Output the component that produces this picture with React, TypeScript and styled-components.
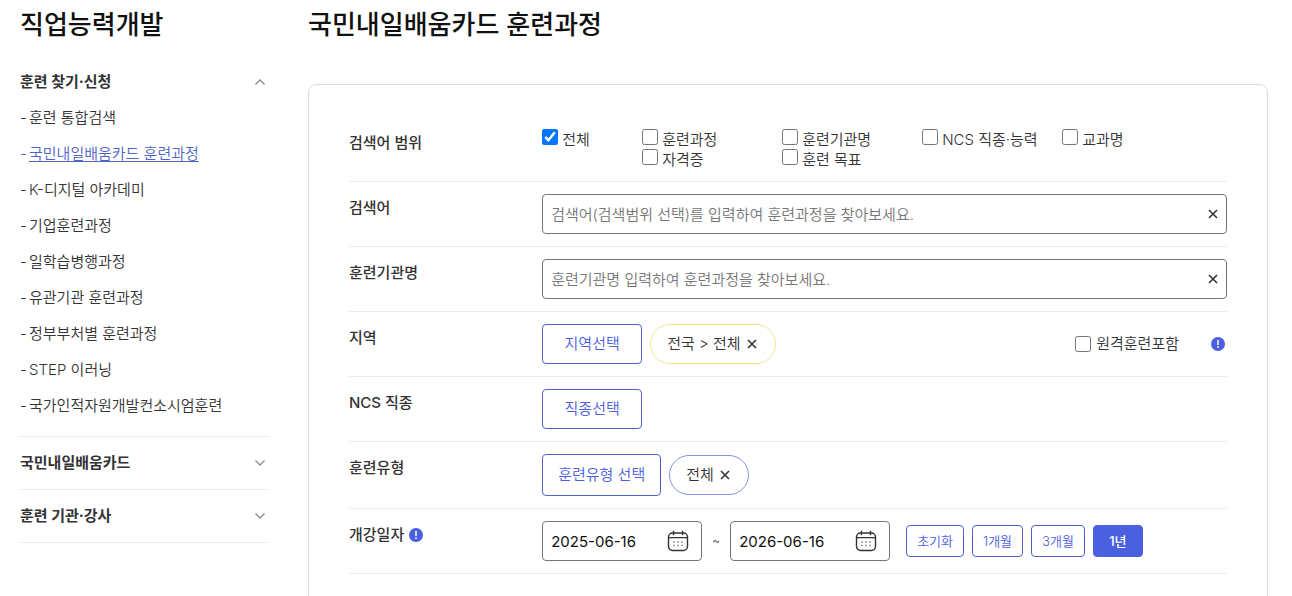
import React, { useState } from 'react';
import styled, { createGlobalStyle, css } from 'styled-components';

const blue = '#4a60de';
const outline = '#4f65c4';
const ink = '#333';

const GlobalStyle = createGlobalStyle`
  *, *::before, *::after { box-sizing: border-box; }
  body {
    margin: 0;
    background: #fff;
    color: ${ink};
    font-family: Inter, "Noto Sans CJK KR", sans-serif;
    font-size: 15px;
    font-weight: 350;
    line-height: 20px;
  }
  button, input { font: inherit; color: inherit; }
  button { cursor: pointer; }
`;

const Page = styled.div`
  display: flex;
  gap: 40px;
  padding: 0 24px 0 20px;
`;

const Sidebar = styled.aside`
  flex: 0 0 248px;
`;

const Main = styled.main`
  flex: 1;
  min-width: 0;
`;

const Title = styled.h1`
  margin: 0;
  font-size: 26px;
  line-height: 50px;
  font-weight: 500;
  color: #111;
`;

const SideTitle = styled(Title).attrs({ as: 'h2' })`
  margin-bottom: 6px;
`;

const Group = styled.section`
  padding: 8px 0;
  border-bottom: 1px solid #ebebeb;
`;

const GroupHead = styled.button`
  display: flex;
  align-items: center;
  justify-content: space-between;
  width: 100%;
  height: 36px;
  padding: 0 3px 0 0;
  border: 0;
  background: none;
  font-weight: 700;
  text-align: left;
`;

const MenuList = styled.ul`
  margin: 0;
  padding: 0 0 4px;
  list-style: none;
`;

const MenuItem = styled.li<{ $active?: boolean }>`
  display: flex;
  line-height: 36px;
  color: ${(p) => (p.$active ? outline : ink)};
  &::before {
    content: '-';
    flex: 0 0 9px;
  }
`;

const MenuLink = styled.a<{ $active?: boolean }>`
  color: inherit;
  text-decoration: ${(p) => (p.$active ? 'underline' : 'none')};
  text-underline-offset: 2px;
`;

const Card = styled.form`
  margin-top: 34px;
  padding: 32px 40px 40px;
  border: 1px solid #ddd;
  border-radius: 8px;
`;

const Row = styled.div`
  display: flex;
  padding: 12px 0;
  border-bottom: 1px solid #ebebeb;
`;

const RowLabel = styled.div`
  display: flex;
  align-items: center;
  gap: 5px;
  flex: 0 0 22%;
  height: 28px;
  font-weight: 500;
`;

const RowBody = styled.div`
  display: flex;
  align-items: center;
  gap: 8px;
  flex: 1;
  min-width: 0;
`;

const ScopeGrid = styled.div`
  display: grid;
  grid-template-columns: 100px repeat(4, 140px);
  grid-auto-rows: 20px;
`;

const CheckLabel = styled.label<{ $start?: boolean }>`
  display: flex;
  align-items: flex-start;
  gap: 4px;
  grid-column: ${(p) => (p.$start ? '2' : 'auto')};
  line-height: 22px;
  white-space: nowrap;
`;

const CheckBox = styled.input.attrs({ type: 'checkbox' })`
  width: 16px;
  height: 16px;
  margin: 0;
`;

const RemoteLabel = styled(CheckLabel)`
  align-items: center;
  gap: 5px;
`;

const Remote = styled.div`
  display: flex;
  align-items: center;
  gap: 32px;
  margin-left: auto;
  padding-right: 2px;
`;

const Field = styled.div<{ $date?: boolean }>`
  display: flex;
  align-items: center;
  height: 40px;
  padding: 0 8px;
  border: 1px solid #767676;
  border-radius: 4px;
  ${(p) => (p.$date ? css`flex: 0 0 160px; padding-right: 12px; color: #111; font-weight: 400;` : css`flex: 1;`)}
`;

const TextInput = styled.input`
  flex: 1;
  min-width: 0;
  width: 100%;
  height: 36px;
  padding: 0;
  border: 0;
  outline: 0;
  background: none;
  &::placeholder { color: #767676; }
`;

const IconButton = styled.button`
  display: flex;
  padding: 0;
  border: 0;
  background: none;
`;

const PickButton = styled.button<{ $tall?: boolean }>`
  min-width: 100px;
  height: ${(p) => (p.$tall ? 42 : 40)}px;
  padding: 0 15px;
  border: 1px solid ${outline};
  border-radius: 4px;
  background: #fff;
  color: ${blue};
`;

const Chip = styled.span<{ $color: string }>`
  display: flex;
  align-items: center;
  gap: 6px;
  height: 40px;
  padding: 0 18px 0 16px;
  border: 1px solid ${(p) => p.$color};
  border-radius: 20px;
`;

const Tilde = styled.span`
  flex: 0 0 12px;
  text-align: center;
  font-size: 12px;
`;

const Periods = styled.div`
  display: flex;
  gap: 8px;
  margin-left: 8px;
`;

const PeriodButton = styled.button<{ $on?: boolean }>`
  min-width: 50px;
  height: 32px;
  padding: 0 10px;
  border: 1px solid ${(p) => (p.$on ? blue : outline)};
  border-radius: 4px;
  background: ${(p) => (p.$on ? blue : '#fff')};
  color: ${(p) => (p.$on ? '#fff' : blue)};
  font-size: 13px;
  font-weight: ${(p) => (p.$on ? 500 : 350)};
`;

const Chevron = ({ up }: { up?: boolean }) => (
  <svg width="10" height="10" viewBox="0 0 10 10" fill="none" stroke="#8a8a8a" strokeWidth="1.3" aria-hidden>
    <path d={up ? 'M0.5 7.5 5 3l4.5 4.5' : 'M0.5 2.5 5 7l4.5-4.5'} />
  </svg>
);

const Cross = () => (
  <svg width="10" height="10" viewBox="0 0 10 10" stroke="#333" strokeWidth="1.6" aria-hidden>
    <path d="M1 1l8 8M9 1 1 9" />
  </svg>
);

const Info = () => (
  <svg width="14" height="14" viewBox="0 0 14 14" aria-hidden>
    <circle cx="7" cy="7" r="7" fill={blue} />
    <path d="M7 3v5M7 9.3v1.6" stroke="#fff" strokeWidth="1.5" />
  </svg>
);

const Calendar = () => (
  <svg width="22" height="22" viewBox="0 0 22 22" fill="none" stroke="#333" strokeWidth="1.4" aria-hidden>
    <rect x="1.5" y="3" width="19" height="17.5" rx="4" />
    <path d="M1.5 7.6h19M6.5 0.8v4.4M15.5 0.8v4.4" />
    <path d="M6 12h1.6M10.2 12h1.6M14.4 12H16M6 15.5h1.6M10.2 15.5h1.6M14.4 15.5H16" strokeWidth="1.6" stroke="#888" />
  </svg>
);

const menu = [
  '훈련 통합검색',
  '국민내일배움카드 훈련과정',
  'K-디지털 아카데미',
  '기업훈련과정',
  '일학습병행과정',
  '유관기관 훈련과정',
  '정부부처별 훈련과정',
  'STEP 이러닝',
  '국가인적자원개발컨소시엄훈련',
];

const scopes = ['전체', '훈련과정', '훈련기관명', 'NCS 직종·능력', '교과명', '자격증', '훈련 목표'];

const periods = ['초기화', '1개월', '3개월', '1년'];

function SearchRow({ id, label, placeholder }: { id: string; label: string; placeholder: string }) {
  const [value, setValue] = useState('');
  return (
    <Row>
      <RowLabel as="label" htmlFor={id}>{label}</RowLabel>
      <RowBody>
        <Field>
          <TextInput id={id} value={value} onChange={(e) => setValue(e.target.value)} placeholder={placeholder} />
          <IconButton type="button" aria-label="지우기" onClick={() => setValue('')}><Cross /></IconButton>
        </Field>
      </RowBody>
    </Row>
  );
}

function DateField({ label, initial }: { label: string; initial: string }) {
  return (
    <Field $date>
      <TextInput aria-label={label} defaultValue={initial} />
      <IconButton type="button" aria-label="달력 열기"><Calendar /></IconButton>
    </Field>
  );
}

export default function App() {
  const [period, setPeriod] = useState('1년');
  return (
    <>
      <GlobalStyle />
      <Page>
        <Sidebar>
          <SideTitle>직업능력개발</SideTitle>
          <Group>
            <GroupHead type="button" aria-expanded>훈련 찾기·신청<Chevron up /></GroupHead>
            <MenuList>
              {menu.map((name, i) => (
                <MenuItem key={name} $active={i === 1}>
                  <MenuLink href="#" $active={i === 1}>{name}</MenuLink>
                </MenuItem>
              ))}
            </MenuList>
          </Group>
          <Group><GroupHead type="button">국민내일배움카드<Chevron /></GroupHead></Group>
          <Group><GroupHead type="button">훈련 기관·강사<Chevron /></GroupHead></Group>
        </Sidebar>
        <Main>
          <Title>국민내일배움카드 훈련과정</Title>
          <Card onSubmit={(e) => e.preventDefault()}>
            <Row>
              <RowLabel>검색어 범위</RowLabel>
              <RowBody>
                <ScopeGrid>
                  {scopes.map((name, i) => (
                    <CheckLabel key={name} $start={i === 5}>
                      <CheckBox defaultChecked={i === 0} />{name}
                    </CheckLabel>
                  ))}
                </ScopeGrid>
              </RowBody>
            </Row>
            <SearchRow id="keyword" label="검색어" placeholder="검색어(검색범위 선택)를 입력하여 훈련과정을 찾아보세요." />
            <SearchRow id="organ" label="훈련기관명" placeholder="훈련기관명 입력하여 훈련과정을 찾아보세요." />
            <Row>
              <RowLabel>지역</RowLabel>
              <RowBody>
                <PickButton type="button">지역선택</PickButton>
                <Chip $color="#f3e58f">전국 &gt; 전체 <IconButton type="button" aria-label="전국 삭제"><Cross /></IconButton></Chip>
                <Remote>
                  <RemoteLabel><CheckBox />원격훈련포함</RemoteLabel>
                  <IconButton type="button" aria-label="원격훈련 안내"><Info /></IconButton>
                </Remote>
              </RowBody>
            </Row>
            <Row>
              <RowLabel>NCS 직종</RowLabel>
              <RowBody><PickButton type="button">직종선택</PickButton></RowBody>
            </Row>
            <Row>
              <RowLabel>훈련유형</RowLabel>
              <RowBody>
                <PickButton type="button" $tall>훈련유형 선택</PickButton>
                <Chip $color="#8593e0">전체 <IconButton type="button" aria-label="전체 삭제"><Cross /></IconButton></Chip>
              </RowBody>
            </Row>
            <Row>
              <RowLabel>개강일자<IconButton type="button" aria-label="개강일자 안내"><Info /></IconButton></RowLabel>
              <RowBody>
                <DateField label="시작일" initial="2025-06-16" />
                <Tilde>~</Tilde>
                <DateField label="종료일" initial="2026-06-16" />
                <Periods>
                  {periods.map((name) => (
                    <PeriodButton key={name} type="button" $on={name === period} onClick={() => setPeriod(name)}>{name}</PeriodButton>
                  ))}
                </Periods>
              </RowBody>
            </Row>
          </Card>
        </Main>
      </Page>
    </>
  );
}
